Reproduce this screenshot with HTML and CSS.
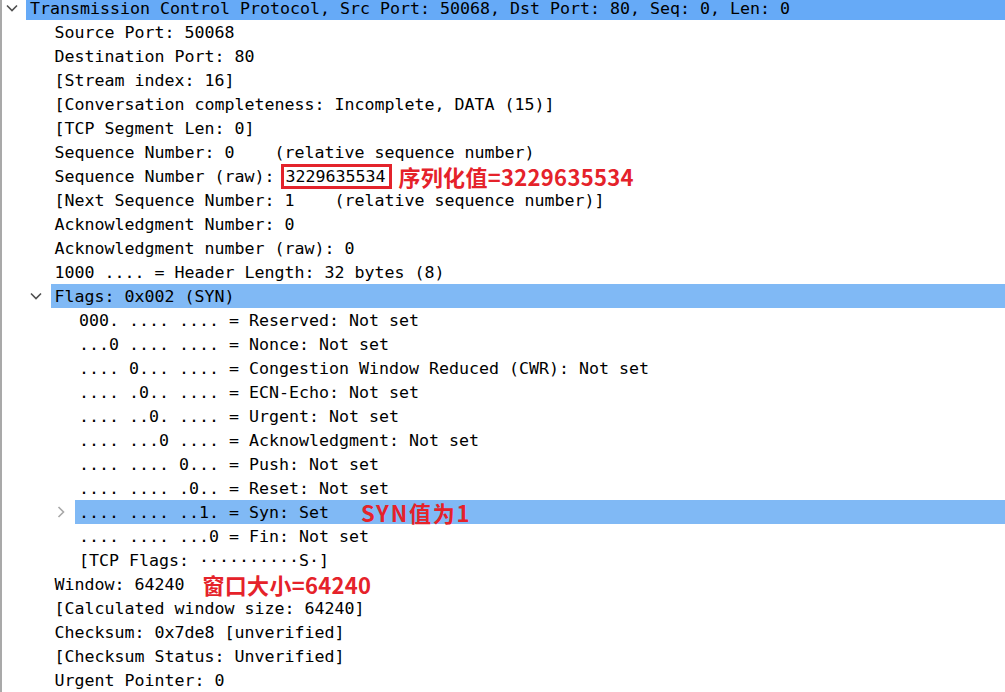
FILE: index.html
```html
<!DOCTYPE html>
<html>
<head>
<meta charset="utf-8">
<link rel="stylesheet" href="styles.css">
</head>
<body>
<div class="tree">
  <div class="row l0">
    <span class="tw"><svg width="12" height="8" viewBox="0 0 12 8"><path d="M1 1.5 L6 6.5 L11 1.5" class="chev-d"/></svg></span>
    <span class="lbl sel">Transmission Control Protocol, Src Port: 50068, Dst Port: 80, Seq: 0, Len: 0</span>
  </div>
  <div class="row l1"><span class="tw"></span><span class="lbl">Source Port: 50068</span></div>
  <div class="row l1"><span class="tw"></span><span class="lbl">Destination Port: 80</span></div>
  <div class="row l1"><span class="tw"></span><span class="lbl">[Stream index: 16]</span></div>
  <div class="row l1"><span class="tw"></span><span class="lbl">[Conversation completeness: Incomplete, DATA (15)]</span></div>
  <div class="row l1"><span class="tw"></span><span class="lbl">[TCP Segment Len: 0]</span></div>
  <div class="row l1"><span class="tw"></span><span class="lbl">Sequence Number: 0    (relative sequence number)</span></div>
  <div class="row l1"><span class="tw"></span><span class="lbl">Sequence Number (raw): <span class="boxed">3229635534</span><span class="note note-seq">序列化值=3229635534</span></span></div>
  <div class="row l1"><span class="tw"></span><span class="lbl">[Next Sequence Number: 1    (relative sequence number)]</span></div>
  <div class="row l1"><span class="tw"></span><span class="lbl">Acknowledgment Number: 0</span></div>
  <div class="row l1"><span class="tw"></span><span class="lbl">Acknowledgment number (raw): 0</span></div>
  <div class="row l1"><span class="tw"></span><span class="lbl">1000 .... = Header Length: 32 bytes (8)</span></div>
  <div class="row l1">
    <span class="tw"><svg width="12" height="8" viewBox="0 0 12 8"><path d="M1 1.5 L6 6.5 L11 1.5" class="chev-d"/></svg></span>
    <span class="lbl hl">Flags: 0x002 (SYN)</span>
  </div>
  <div class="row l2"><span class="tw"></span><span class="lbl">000. .... .... = Reserved: Not set</span></div>
  <div class="row l2"><span class="tw"></span><span class="lbl">...0 .... .... = Nonce: Not set</span></div>
  <div class="row l2"><span class="tw"></span><span class="lbl">.... 0... .... = Congestion Window Reduced (CWR): Not set</span></div>
  <div class="row l2"><span class="tw"></span><span class="lbl">.... .0.. .... = ECN-Echo: Not set</span></div>
  <div class="row l2"><span class="tw"></span><span class="lbl">.... ..0. .... = Urgent: Not set</span></div>
  <div class="row l2"><span class="tw"></span><span class="lbl">.... ...0 .... = Acknowledgment: Not set</span></div>
  <div class="row l2"><span class="tw"></span><span class="lbl">.... .... 0... = Push: Not set</span></div>
  <div class="row l2"><span class="tw"></span><span class="lbl">.... .... .0.. = Reset: Not set</span></div>
  <div class="row l2">
    <span class="tw"><svg width="8" height="12" viewBox="0 0 8 12"><path d="M1.5 1 L6.5 6 L1.5 11" class="chev-r"/></svg></span>
    <span class="lbl hl">.... .... ..1. = Syn: Set<span class="note note-syn">SYN值为1</span></span>
  </div>
  <div class="row l2"><span class="tw"></span><span class="lbl">.... .... ...0 = Fin: Not set</span></div>
  <div class="row l2"><span class="tw"></span><span class="lbl">[TCP Flags: ··········S·]</span></div>
  <div class="row l1"><span class="tw"></span><span class="lbl">Window: 64240<span class="note note-win">窗口大小=64240</span></span></div>
  <div class="row l1"><span class="tw"></span><span class="lbl">[Calculated window size: 64240]</span></div>
  <div class="row l1"><span class="tw"></span><span class="lbl">Checksum: 0x7de8 [unverified]</span></div>
  <div class="row l1"><span class="tw"></span><span class="lbl">[Checksum Status: Unverified]</span></div>
  <div class="row l1"><span class="tw"></span><span class="lbl">Urgent Pointer: 0</span></div>
</div>
</body>
</html>
```

FILE: styles.css
```css
html, body {
  margin: 0;
  padding: 0;
  background: #ffffff;
  overflow: hidden;
}

body {
  width: 1005px;
  height: 692px;
  border-left: 2px solid #a9a9a9;
  box-sizing: border-box;
}

.tree {
  margin-top: -4px;
  margin-left: -2px;
  display: flex;
  flex-direction: column;
  font-family: "DejaVu Sans Mono", "Liberation Mono", monospace;
  font-size: 16.62px;
  color: #000;
}

.row {
  display: flex;
  height: 24px;
  line-height: 25px;
  white-space: pre;
}

.l0 { padding-left: 0; }
.l1 { padding-left: 24.5px; }
.l2 { padding-left: 49px; }

.tw {
  width: 26px;
  flex: none;
  display: flex;
  align-items: center;
  justify-content: center;
  padding-right: 3px;
  box-sizing: border-box;
}

.chev-d {
  fill: none;
  stroke: #505050;
  stroke-width: 1.6;
}

.chev-r {
  fill: none;
  stroke: #a8a8a8;
  stroke-width: 1.6;
}

.lbl {
  flex: 1;
  padding-left: 4px;
  white-space: pre;
}

.sel { background: #66aaf7; }
.hl { background: #80b9f5; }

.boxed {
  display: inline-block;
  vertical-align: top;
  height: 25px;
  line-height: 20px;
  box-sizing: border-box;
  border: 3px solid #e3232b;
  padding: 0 3px 0 2px;
  margin-left: -4px;
}

.note {
  display: inline-block;
  vertical-align: top;
  line-height: 24px;
  height: 24px;
  font-family: "Noto Sans CJK SC", "Noto Sans", sans-serif;
  font-weight: 700;
  font-size: 22px;
  color: #e5222a;
  letter-spacing: 0.3px;
}

.note-seq { margin-left: 7px; }
.note-syn { margin-left: 32px; letter-spacing: 1.8px; }
.note-win { margin-left: 18px; }
```
